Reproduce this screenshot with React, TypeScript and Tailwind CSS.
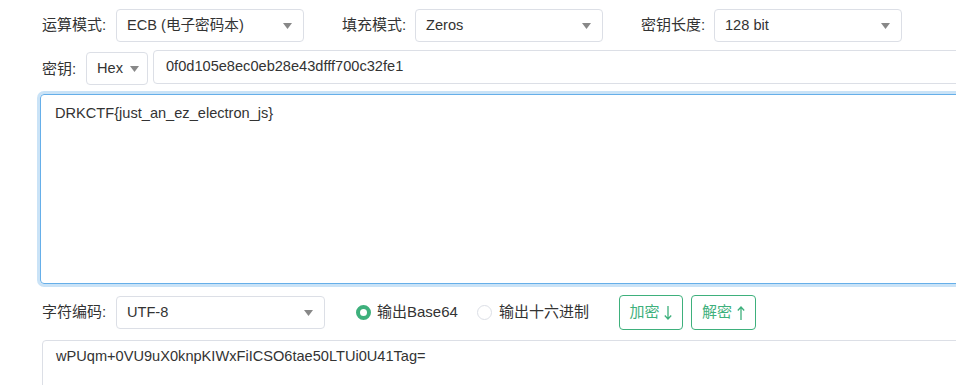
import React from "react";

const font = { fontFamily: '"Liberation Sans", Arial, "Noto Sans CJK SC", sans-serif' };

// 下拉框（只画外观）
const Select = ({ value, className }: { value: string; className: string }) => (
  <div
    className={`shrink-0 flex items-center justify-between border border-[#dcdfe6] rounded-[4px] bg-white pl-[10px] pr-[11px] text-[14.6px] text-[#333] ${className}`}
  >
    <span>{value}</span>
    <svg width="9" height="6" viewBox="0 0 9 6">
      <path d="M0 0h9L4.5 6z" fill="#888" />
    </svg>
  </div>
);

const Label = ({ text, className = "" }: { text: string; className?: string }) => (
  <span className={`shrink-0 text-[15px] text-[#333] whitespace-nowrap ${className}`}>{text}</span>
);

const Arrow = ({ up }: { up?: boolean }) => (
  <svg width="8" height="14" viewBox="0 0 8 14" className={`ml-[5px] ${up ? "rotate-180" : ""}`}>
    <path d="M4 0v13M0.8 9.5L4 13l3.2-3.5" stroke="#3eb07c" strokeWidth="1.3" fill="none" />
  </svg>
);

export default function App() {
  return (
    <div className="w-[956px] h-[385px] overflow-hidden bg-white relative" style={font}>
      {/* 第一行 */}
      <div className="flex items-center pl-[42px] pt-[9px]">
        <Label text="运算模式:" className="w-[74px]" />
        <Select value="ECB (电子密码本)" className="w-[188px] h-[33px]" />
        <Label text="填充模式:" className="w-[73px] ml-[38px]" />
        <Select value="Zeros" className="w-[188px] h-[33px]" />
        <Label text="密钥长度:" className="w-[73px] ml-[38px]" />
        <Select value="128 bit" className="w-[188px] h-[33px]" />
      </div>

      {/* 第二行 */}
      <div className="flex items-start pl-[42px] mt-[8px]">
        <Label text="密钥:" className="w-[44px] mt-[8px]" />
        <Select value="Hex" className="w-[62px] h-[33px] mt-[2px] !pr-[8px]" />
        <div className="shrink-0 ml-[5px] w-[840px] h-[34px] border border-[#dcdfe6] rounded-[4px] flex items-center pl-[12px] text-[14.6px] text-[#333]">
          0f0d105e8ec0eb28e43dfff700c32fe1
        </div>
      </div>

      {/* 输入框 */}
      <div className="ml-[40px] mt-[9px] w-[960px] h-[190px] border border-[#66afe9] rounded-[4px] shadow-[0_0_0_3px_rgba(102,175,233,0.35)] pl-[14px] pt-[8px] text-[14.6px] text-[#333]">
        DRKCTF{"{"}just_an_ez_electron_js{"}"}
      </div>

      {/* 第三行 */}
      <div className="flex items-center pl-[42px] mt-[11px]">
        <Label text="字符编码:" className="w-[74px]" />
        <Select value="UTF-8" className="w-[209px] h-[33px]" />
        <div className="shrink-0 flex items-center ml-[31px]">
          <span className="w-[15px] h-[15px] rounded-full border-[4px] border-[#3eb07c] bg-white" />
          <Label text="输出Base64" className="ml-[6px]" />
        </div>
        <div className="shrink-0 flex items-center ml-[19px]">
          <span className="w-[15px] h-[15px] rounded-full border border-[#dcdfe6] bg-white" />
          <Label text="输出十六进制" className="ml-[7px]" />
        </div>
        <button className="shrink-0 ml-[30px] w-[64px] h-[35px] border border-[#3eb07c] rounded-[4px] text-[#3eb07c] text-[15px] bg-white flex items-center justify-center">
          加密
          <Arrow />
        </button>
        <button className="shrink-0 ml-[8px] w-[65px] h-[35px] border border-[#3eb07c] rounded-[4px] text-[#3eb07c] text-[15px] bg-white flex items-center justify-center">
          解密
          <Arrow up />
        </button>
      </div>

      {/* 输出框 */}
      <div className="ml-[42px] mt-[10px] w-[960px] h-[80px] border border-[#dcdfe6] rounded-[4px] pl-[13px] pt-[5px] text-[14.6px] text-[#333]">
        wPUqm+0VU9uX0knpKIWxFiICSO6tae50LTUi0U41Tag=
      </div>
    </div>
  );
}
